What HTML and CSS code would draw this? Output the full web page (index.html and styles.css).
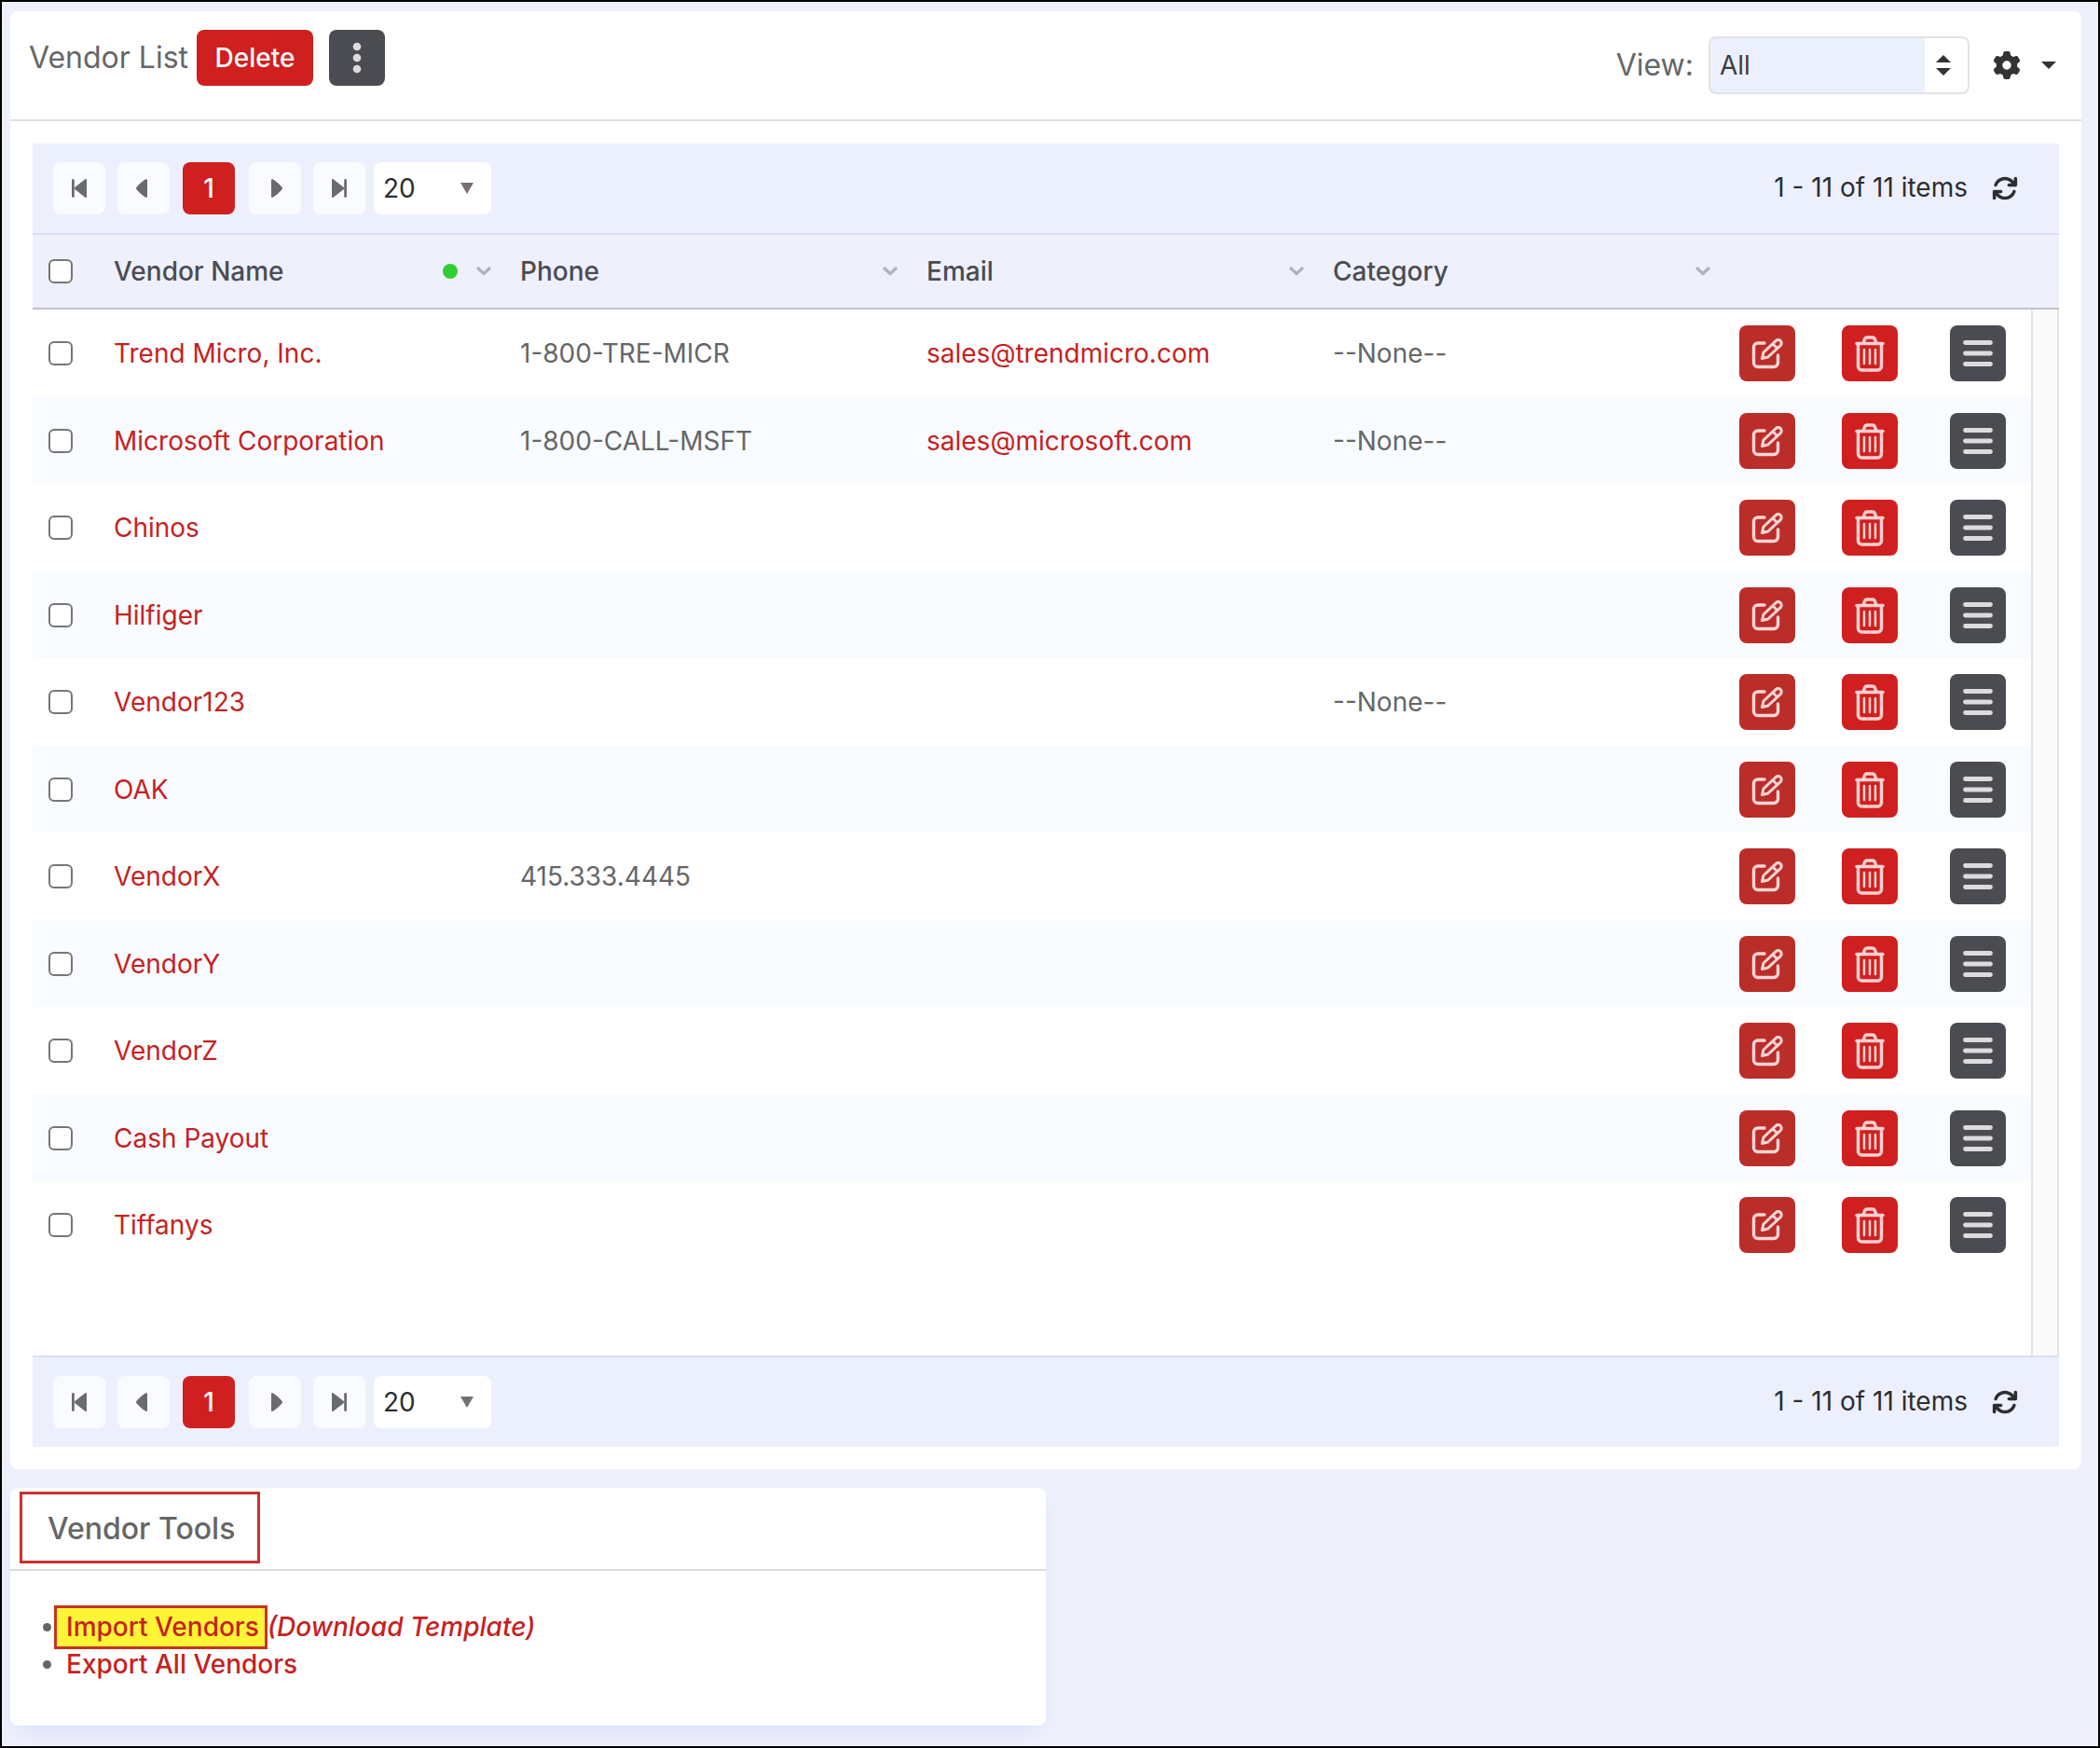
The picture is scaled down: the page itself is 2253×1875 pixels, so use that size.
FILE: index.html
```html
<!DOCTYPE html>
<html lang="en">
<head>
<meta charset="utf-8">
<title>Vendor List</title>
<meta name="viewport" content="width=device-width, initial-scale=1">
<link rel="stylesheet" href="styles.css">
</head>
<body>
<svg class="sprite" aria-hidden="true">
  <symbol id="i-first" viewBox="0 0 24 24"><path d="M5.400 3.400v17.200" stroke="currentColor" stroke-width="2.800" stroke-linecap="round"/><path d="M20 3v18a1 1 0 0 1-1.600.8L7.500 13.300a1.700 1.700 0 0 1 0-2.600L18.400 2.200A1 1 0 0 1 20 3z" fill="currentColor"/></symbol>
  <symbol id="i-prev" viewBox="0 0 24 24"><path d="M16 3.200v17.600a1.100 1.100 0 0 1-1.600 1c-3.200-1.500-6-4.500-9.700-8.200a2.200 2.200 0 0 1 0-3.200c3.700-3.700 6.500-6.700 9.700-8.200a1.100 1.100 0 0 1 1.600 1z" fill="currentColor"/></symbol>
  <symbol id="i-edit" viewBox="0 0 36 36" fill="none" stroke="currentColor" stroke-width="3.400" stroke-linecap="round" stroke-linejoin="round"><path d="M15 7H8a4.500 4.500 0 0 0-4.500 4.500V28A4.500 4.500 0 0 0 8 32.500h17a4.500 4.500 0 0 0 4.500-4.500v-8"/><path stroke-width="3" d="M12.500 23.500l1.500-6.500L27.200 4.600a3.500 3.500 0 0 1 5 5L18.800 22z M23.800 7.800l5 5"/></symbol>
  <symbol id="i-trash" viewBox="0 0 36 40" fill="none" stroke="currentColor" stroke-linecap="round" stroke-linejoin="round"><path stroke-width="3.500" d="M4 9.500h28M5.500 10v24a4 4 0 0 0 4 4h17a4 4 0 0 0 4-4V10M11 9l1.500-4a3 3 0 0 1 3-2h5a3 3 0 0 1 3 2L25 9"/><path stroke-width="2.500" d="M12 16v15M18 16v15M24 16v15"/></symbol>
  <symbol id="i-menu" viewBox="0 0 36 36"><path d="M4.500 6.500h27M4.500 18h27M4.500 29.500h27" stroke="currentColor" stroke-width="4.800" stroke-linecap="round"/></symbol>
  <symbol id="i-chevron" viewBox="0 0 18 12"><path d="M2 2l7 6.500L16 2" fill="none" stroke="currentColor" stroke-width="3.200"/></symbol>
  <symbol id="i-refresh" viewBox="0 0 512 512"><path fill="currentColor" d="M105.100 202.600c7.700-21.800 20.200-42.300 37.800-59.800c62.500-62.500 163.800-62.500 226.300 0L386.300 160H336c-17.700 0-32 14.300-32 32s14.300 32 32 32H463.900c17.700 0 32-14.300 32-32V64c0-17.700-14.300-32-32-32s-32 14.300-32 32v51.200L414.400 97.600c-87.500-87.500-229.300-87.500-316.800 0C73.200 122 55.600 150.700 44.800 181.400c-5.900 16.700 2.900 34.900 19.500 40.800s34.900-2.900 40.800-19.500zM39 289.300c-5 1.500-9.800 4.200-13.700 8.200c-4 4-6.700 8.800-8.100 14c-.3 1.200-.6 2.500-.8 3.800c-.3 1.700-.4 3.400-.4 5.100V448c0 17.700 14.300 32 32 32s32-14.300 32-32V396.900l17.600 17.500c87.500 87.400 229.300 87.400 316.700 0c24.400-24.400 42.100-53.100 52.900-83.700c5.900-16.700-2.900-34.900-19.500-40.800s-34.900 2.900-40.800 19.500c-7.700 21.800-20.200 42.300-37.800 59.800c-62.500 62.500-163.800 62.500-226.300 0L125.600 352H176c17.700 0 32-14.300 32-32s-14.300-32-32-32H48.400c-1.600 0-3.200.1-4.800.3s-3.100.5-4.600 1z"/></symbol>
</svg>

<main class="page">
  <section class="card">
    <header class="card-header">
      <div class="title-group">
        <h1 class="title">Vendor List</h1>
        <button class="btn btn-delete" type="button">Delete</button>
        <button class="btn btn-dark" type="button" aria-label="More actions"><svg width="12" height="34" viewBox="0 0 12 34" fill="currentColor"><circle cx="6" cy="5" r="4.300"/><circle cx="6" cy="17" r="4.300"/><circle cx="6" cy="29" r="4.300"/></svg></button>
      </div>
      <div class="view-group">
        <label class="view-label" for="view">View:</label>
        <div class="view-box">
          <select class="view-select" id="view"><option>All</option></select>
          <svg class="view-arrows" width="16" height="22" viewBox="0 0 16 22" fill="currentColor"><path d="M8 0l8 8H0zM8 22l8-8H0z"/></svg>
        </div>
        <button class="gear" type="button" aria-label="Settings">
          <svg width="30" height="30" viewBox="0 0 512 512" fill="currentColor"><path d="M495.900 166.600c3.200 8.700.5 18.400-6.400 24.600l-43.300 39.400c1.100 8.300 1.700 16.800 1.700 25.400s-.6 17.100-1.700 25.400l43.300 39.400c6.900 6.200 9.600 15.900 6.400 24.600c-4.400 11.900-9.700 23.300-15.800 34.300l-4.700 8.100c-6.600 11-14 21.400-22.100 31.200c-5.900 7.200-15.700 9.600-24.500 6.800l-55.700-17.700c-13.400 10.300-28.200 18.900-44 25.400l-12.500 57.100c-2 9.100-9 16.300-18.200 17.800c-13.800 2.300-28 3.500-42.500 3.500s-28.700-1.200-42.500-3.500c-9.200-1.500-16.200-8.700-18.200-17.800l-12.500-57.100c-15.800-6.500-30.600-15.100-44-25.400L83.100 425.900c-8.800 2.800-18.600.3-24.500-6.800c-8.100-9.800-15.500-20.200-22.100-31.200l-4.700-8.100c-6.100-11-11.400-22.400-15.800-34.300c-3.200-8.700-.5-18.400 6.400-24.600l43.300-39.400C64.600 273.100 64 264.600 64 256s.6-17.100 1.700-25.400L22.400 191.200c-6.900-6.200-9.600-15.900-6.400-24.600c4.400-11.900 9.700-23.300 15.800-34.300l4.700-8.100c6.600-11 14-21.400 22.100-31.200c5.900-7.200 15.700-9.600 24.500-6.800l55.700 17.700c13.400-10.300 28.200-18.900 44-25.400l12.500-57.100c2-9.100 9-16.300 18.200-17.800C227.300 1.200 241.500 0 256 0s28.700 1.200 42.500 3.500c9.200 1.500 16.200 8.700 18.200 17.800l12.500 57.100c15.800 6.500 30.600 15.100 44 25.400l55.700-17.700c8.800-2.800 18.600-.3 24.500 6.800c8.100 9.800 15.500 20.200 22.100 31.200l4.700 8.100c6.100 11 11.400 22.400 15.800 34.300zM256 336a80 80 0 1 0 0-160 80 80 0 1 0 0 160z"/></svg>
          <svg width="16" height="8" viewBox="0 0 16 8" fill="currentColor"><path d="M0 0h16L8 8z"/></svg>
        </button>
      </div>
    </header>

    <div class="grid" id="grid"></div>
  </section>

  <section class="card tools">
    <header class="tools-header"><h2 class="tools-title">Vendor Tools</h2></header>
    <ul class="tools-list">
      <li><a class="marked" href="#import">Import Vendors</a><a href="#template"><em>(Download Template)</em></a></li>
      <li><a href="#export">Export All Vendors</a></li>
    </ul>
  </section>
</main>
<script src="grid.js"></script>
</body>
</html>
```
FILE: grid.js
```js
const vendors = [
  ["Trend Micro, Inc.", "1-800-TRE-MICR", "sales@trendmicro.com", "--None--"],
  ["Microsoft Corporation", "1-800-CALL-MSFT", "sales@microsoft.com", "--None--"],
  ["Chinos", "", "", ""],
  ["Hilfiger", "", "", ""],
  ["Vendor123", "", "", "--None--"],
  ["OAK", "", "", ""],
  ["VendorX", "415.333.4445", "", ""],
  ["VendorY", "", "", ""],
  ["VendorZ", "", "", ""],
  ["Cash Payout", "", "", ""],
  ["Tiffanys", "", "", ""]
];

const icon = (name, w, h, cls = "") =>
  `<svg class="${cls}" width="${w}" height="${h}" aria-hidden="true"><use href="#i-${name}"/></svg>`;

const pager = (where) => `
  <nav class="pager pager-${where}" aria-label="Pages, ${where}">
    <div class="pages">
      <button class="page-btn" type="button" aria-label="First page">${icon("first", 24, 24)}</button>
      <button class="page-btn" type="button" aria-label="Previous page">${icon("prev", 24, 24)}</button>
      <button class="page-btn current" type="button">1</button>
      <button class="page-btn" type="button" aria-label="Next page">${icon("prev", 24, 24, "flip")}</button>
      <button class="page-btn" type="button" aria-label="Last page">${icon("first", 24, 24, "flip")}</button>
    </div>
    <div class="size-box">
      <select class="size-select" aria-label="Items per page"><option>20</option></select>
      <svg class="size-arrow" width="14" height="12" viewBox="0 0 14 12"><path d="M0 0h14L7 12z" fill="currentColor"/></svg>
    </div>
    <span class="summary">1 - 11 of 11 items</span>
    <button class="refresh" type="button" aria-label="Refresh">${icon("refresh", 28, 28)}</button>
  </nav>`;

const heading = (text, sorted) => `
  <th scope="col"><div class="heading"><span>${text}</span>${sorted ? '<i class="dot"></i>' : ""}${icon("chevron", 18, 12, "chevron")}</div></th>`;

const row = ([name, phone, email, category]) => `
  <tr>
    <td><input type="checkbox" aria-label="Select ${name}"></td>
    <td><a href="#vendor">${name}</a></td>
    <td>${phone}</td>
    <td>${email ? `<a href="mailto:${email}">${email}</a>` : ""}</td>
    <td>${category}</td>
    <td><button class="btn btn-edit" type="button" aria-label="Edit">${icon("edit", 36, 36)}</button></td>
    <td><button class="btn btn-trash" type="button" aria-label="Delete">${icon("trash", 36, 40)}</button></td>
    <td><button class="btn btn-dark" type="button" aria-label="Menu">${icon("menu", 36, 36)}</button></td>
    <td class="gutter"></td>
  </tr>`;

document.getElementById("grid").innerHTML = `
  ${pager("top")}
  <table class="vendors">
    <colgroup>
      <col class="col-check"><col><col><col><col>
      <col class="col-edit"><col class="col-trash"><col class="col-menu"><col class="col-gutter">
    </colgroup>
    <thead><tr>
      <th><input type="checkbox" aria-label="Select all"></th>
      ${heading("Vendor Name", true)}${heading("Phone")}${heading("Email")}${heading("Category")}
      <th colspan="4"></th>
    </tr></thead>
    <tbody>
      ${vendors.map(row).join("")}
      <tr class="rest"><td colspan="8"></td><td class="gutter"></td></tr>
    </tbody>
  </table>
  ${pager("bottom")}`;
```
FILE: styles.css
```css
* { box-sizing: border-box; }

body {
  margin: 0;
  min-height: 100vh;
  border: 2px solid #000;
  background: #eef0fc;
  color: #666;
  font: 400 28px/40px Inter, "Liberation Sans", sans-serif;
}

.sprite { position: absolute; width: 0; height: 0; }
svg { display: block; flex: none; }
a { color: #c5221f; text-decoration: none; }
button, select { font: inherit; color: inherit; }
button { cursor: pointer; }

.page {
  display: flex;
  flex-direction: column;
  gap: 20px;
  padding: 10px 18px 22px 9px;
}

.card { background: #fff; border-radius: 8px; }

.card-header {
  display: flex;
  justify-content: space-between;
  align-items: flex-start;
  height: 118px;
  padding: 20px 27px 0 20px;
  border-bottom: 2px solid #e0e0e2;
}

.title-group, .view-group { display: flex; align-items: center; }
.title { margin: 0 9px 0 0; font-size: 32px; font-weight: 400; }

.btn {
  display: flex;
  align-items: center;
  justify-content: center;
  width: 60px;
  height: 60px;
  padding: 0;
  border: 0;
  border-radius: 8px;
}
.btn-delete { width: 125px; margin-right: 17px; background: #cf201f; color: #fff; font-weight: 500; }
.btn-dark { background: #4b4c51; color: #dcdce0; }
.btn-edit { background: #bb2d29; color: #ffd6d6; }
.btn-trash { background: #cf201f; color: #ffd0d0; }

.view-group { padding-top: 7px; }
.view-label { margin-right: 16px; font-size: 32px; }
.view-box { position: relative; width: 280px; }
.view-select {
  display: block;
  appearance: none;
  width: 100%;
  height: 62px;
  padding: 0 10px;
  border: 2px solid #e2e3e6;
  border-radius: 8px;
  background: linear-gradient(to left, #fff 46px, #ecf0fc 46px);
  color: #3c3d40;
}
.view-arrows { position: absolute; right: 20px; top: 20px; color: #333; pointer-events: none; }
.gear {
  display: flex;
  align-items: center;
  gap: 22px;
  margin-left: 25px;
  padding: 0;
  border: 0;
  background: none;
  color: #333;
}

.grid { padding: 24px; }

.pager {
  display: flex;
  align-items: center;
  height: 96px;
  padding: 0 44px 0 22px;
  background: #ecf0fc;
  color: #2c2d30;
}
.pager-bottom { height: 98px; border-top: 2px solid #d8dff8; }
.pages { display: flex; gap: 13px; margin-right: 9px; }
.page-btn {
  display: flex;
  align-items: center;
  justify-content: center;
  width: 56px;
  height: 56px;
  padding: 0;
  border: 0;
  border-radius: 8px;
  background: #fafbfe;
  color: #6a6b6e;
}
.current { margin: 0 2px 0 1px; background: #cf201f; color: #fff; font-weight: 500; }
.flip { transform: scaleX(-1); }
.size-box { position: relative; width: 126px; }
.size-select {
  display: block;
  appearance: none;
  width: 100%;
  height: 56px;
  padding: 0 10px;
  border: 0;
  border-radius: 8px;
  background: #fff;
}
.size-arrow { position: absolute; right: 19px; top: 22px; color: #76706f; pointer-events: none; }
.summary { margin-left: auto; padding-bottom: 2px; }
.refresh { margin-left: 26px; padding: 0; border: 0; background: none; }

.vendors { width: 100%; table-layout: fixed; border-spacing: 0; }
.col-check { width: 71px; }
.col-edit { width: 110px; }
.col-trash { width: 116px; }
.col-menu { width: 103px; }
.col-gutter { width: 30px; }

th, td { padding: 0 0 0 16px; text-align: left; }
th {
  height: 82px;
  border-top: 2px solid #d8dff8;
  border-bottom: 2px solid #c2c3ca;
  background: #eef0fc;
  color: #4b4c52;
  font-weight: 500;
}
th:first-child, td:first-child { padding-left: 17px; }
.heading { display: flex; align-items: center; padding-right: 14px; }
.dot { width: 16px; height: 16px; margin-left: auto; border-radius: 50%; background: #32cd32; }
.chevron { margin-left: auto; color: #b2b2ba; }
.dot + .chevron { margin-left: 19px; }

tbody tr { height: 94px; }
tbody tr:nth-child(even) { height: 93px; }
tbody tr:nth-child(even):not(.rest) { background: #f8fbff; }
tbody .gutter { padding: 0; background: #fafafa; border: solid #e4e4e6; border-width: 0 2px; }

input[type="checkbox"] {
  display: block;
  appearance: none;
  width: 26px;
  height: 26px;
  margin: 0;
  border: 2px solid #767676;
  border-radius: 6px;
  background: #fff;
}

.tools { width: 50%; box-shadow: 0 12px 24px -8px #d5ddf5; }
.tools-header { padding: 4px 10px 6px; border-bottom: 2px solid #d8d9db; }
.tools-title {
  width: fit-content;
  margin: 0;
  padding: 17px 24px 14px 27px;
  border: 3px solid #c8322d;
  font-size: 32px;
  font-weight: 500;
}
.tools-list { margin: 0; padding: 40px 20px 46px 60px; font-weight: 500; }
.marked {
  margin-left: -13px;
  padding: 3px 6px 4px 10px;
  border: 3px solid #c8321e;
  background: #fff436;
}
```
